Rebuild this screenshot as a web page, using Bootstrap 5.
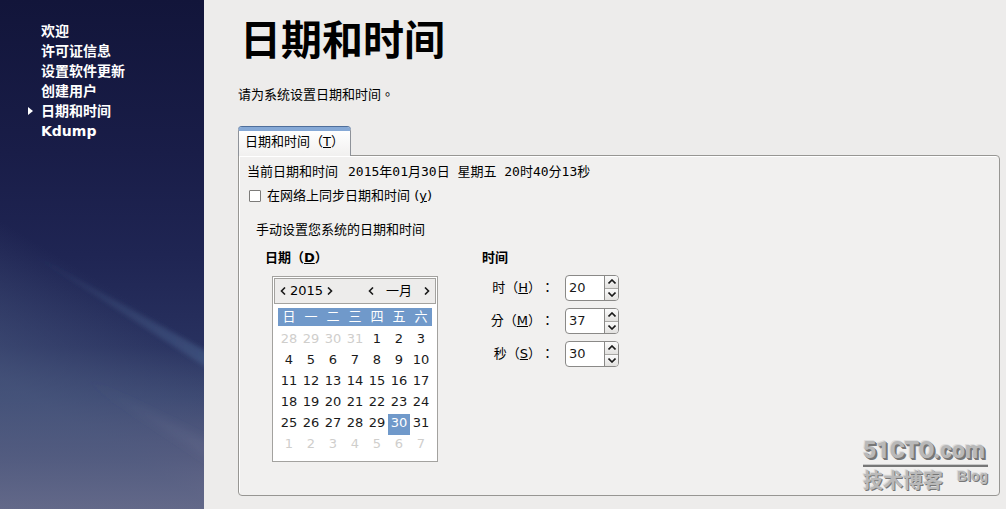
<!DOCTYPE html>
<html lang="zh-CN">
<head>
<meta charset="utf-8">
<meta name="viewport" content="width=device-width, initial-scale=1">
<title>日期和时间</title>
<link href="https://cdn.jsdelivr.net/npm/bootstrap@5.3.0/dist/css/bootstrap.min.css" rel="stylesheet">
<style>
body{font-family:"DejaVu Sans","Noto Sans CJK SC",sans-serif;font-size:13px;line-height:20px;color:#000;background:#edeceb;text-spacing-trim:space-all}
.mid{font-family:"DejaVu Sans","Noto Sans CJK TC",sans-serif;font-feature-settings:"locl" 0,"chws" 0}
.steps{width:204px;background:#161a42;color:#fff;font-size:14px;font-weight:700;padding:21px 0 0 41px}
.steps svg.sky{position:absolute;inset:0;width:100%;height:100%}
.steps ol{position:relative}
.step-on::before{content:"";position:absolute;left:-13px;margin-top:6px;border:4px solid transparent;border-left:5px solid #fff;border-right:0}
.work{padding:12px 6px 13px 34px}
.work h1{font-size:41px;line-height:58px;font-weight:700;margin:0 0 15px 2px}
.work .tabbar{margin-top:22px}
.tabbar .nav-link{font-size:13px;line-height:20px;color:#000;padding:1px 6px 4px;border:1px solid #8e9299;border-top:4px solid #86a9d6;border-bottom:0;border-radius:4px 4px 0 0;background:linear-gradient(#fff,#f1f0ef);position:relative;margin-bottom:-1px;box-shadow:0 -1px #4f6f9b}
.pane{border:1px solid #979693;border-radius:0 4px 4px 4px;background:#f1f0ef;box-shadow:inset 1px 1px #fff;padding:6px 8px}
.mono{font-family:"DejaVu Sans Mono","Noto Sans CJK SC",monospace;white-space:pre;margin-left:10px}
.sync{padding:4px 0 0 2px;gap:6px}
.sync input{appearance:none;width:12px;height:12px;margin:0;border:1px solid #7c7b79;border-radius:1px;background:#fff}
.sync input:checked{background:#7099ca}
.manual{padding:14px 0 0 9px}
.manual h2{font-size:13px;line-height:20px;font-weight:700;margin:0}
.cols{padding:8px 0 0 9px;gap:44px}
.cal{margin:8px 0 0 7px;width:166px;border:1px solid #a3a29f;background:#fff;padding:1px 1px 5px}
.calhead{border:1px solid #a3a29f;background:#edeceb;height:26px;padding:0 3px}
.calhead button{border:0;background:none;padding:0;width:10px;height:20px;line-height:0}
.calhead button svg{display:block;margin:auto}
.year{padding:0 2px}
.month{width:66px}
.days{width:154px;margin:4px auto 0;table-layout:fixed;text-align:center;line-height:17px}
.days th{background:#7099ca;color:#fff;font-weight:400;height:18px;padding:0;line-height:18px}
.days td{padding:0 0 4px;color:#1a1a1a}
.days tbody::before{content:"";display:block;height:4px}
.days .off{color:#cfcecc}
.days .sel{background:#7099ca;color:#fff}
.clock{margin-top:7px;gap:7px;display:grid;grid-template-columns:72px 54px;column-gap:11px}
.clock label{text-align:right;line-height:26px;white-space:nowrap}
.spin{height:26px;border:1px solid #8a8987;border-radius:4px;background:#fff;overflow:hidden}
.spin input{border:0;outline:0;width:38px;padding:0 0 0 3px;background:none;color:#1a1a1a}
.arrows{flex:1;border-left:1px solid #8a8987}
.arrows button{flex:1;border:0;padding:0;line-height:0;background:linear-gradient(#fafafa,#e2e1df)}
.arrows button+button{border-top:1px solid #a9a8a5}
.chev{fill:none;stroke:#1a1a1a;stroke-width:1.6}
.brandmark{position:absolute;right:18px;bottom:14px;width:125px;color:#b9b9b9;text-shadow:1px 1px #777,-1px -1px #ddd;font-weight:700}
.brandmark .site{font-family:Roboto,"Liberation Sans",sans-serif;font-weight:900;font-size:23px;line-height:29px;white-space:nowrap;text-shadow:1px 1px #777,2px 2px #777,-1px -1px #ddd;border-bottom:2px solid #777;box-shadow:inset 0 -1px #c8c8c8}
.brandmark .tech{font-size:20px;line-height:28px}
.brandmark .blog{font-family:"Liberation Sans",sans-serif;font-size:14px;line-height:18px}
</style>
</head>
<body>
<div class="d-flex min-vh-100 position-relative">
  <aside class="steps position-relative flex-shrink-0">
    <svg class="sky" viewBox="0 0 204 509" preserveAspectRatio="none" aria-hidden="true">
      <defs>
        <linearGradient id="night" x1="0" y1="0" x2="0" y2="1"><stop offset="0" stop-color="#12153a"/><stop offset=".3" stop-color="#191d48"/><stop offset=".5" stop-color="#1f2553"/><stop offset=".68" stop-color="#28315f"/><stop offset=".78" stop-color="#3a4670"/><stop offset=".9" stop-color="#5c5d80"/><stop offset="1" stop-color="#847c96"/></linearGradient>
        <linearGradient id="glow" gradientUnits="userSpaceOnUse" x1="90" y1="275" x2="20" y2="390"><stop offset="0" stop-color="#4c5b80" stop-opacity="0"/><stop offset="1" stop-color="#4c5b80" stop-opacity=".6"/></linearGradient>
        <linearGradient id="fade" x1="0" y1="0" x2="1" y2="0"><stop offset="0" stop-color="#54719b" stop-opacity="0"/><stop offset="1" stop-color="#4b6592" stop-opacity=".5"/></linearGradient>
        <linearGradient id="haze" x1="0" y1="0" x2="1" y2="0"><stop offset="0" stop-color="#7a809c" stop-opacity="0"/><stop offset="1" stop-color="#7a809c" stop-opacity=".2"/></linearGradient>
        <filter id="soft" x="-10%" y="-10%" width="120%" height="120%"><feGaussianBlur stdDeviation="2"/></filter>
        <filter id="softer" x="-10%" y="-20%" width="120%" height="140%"><feGaussianBlur stdDeviation="4"/></filter>
      </defs>
      <rect width="204" height="509" fill="url(#night)"/>
      <rect y="200" width="204" height="309" fill="url(#glow)"/>
      <path d="M25 250L215 356V373Z" fill="url(#fade)" filter="url(#soft)"/>
      <path d="M70 370L225 450V470Z" fill="url(#haze)" filter="url(#softer)"/>
    </svg>
    <ol class="list-unstyled m-0">
      <li>欢迎</li>
      <li>许可证信息</li>
      <li>设置软件更新</li>
      <li>创建用户</li>
      <li class="step-on" aria-current="step">日期和时间</li>
      <li>Kdump</li>
    </ol>
  </aside>

  <main class="work d-flex flex-column flex-grow-1">
    <h1>日期和时间</h1>
    <p class="mid m-0">请为系统设置日期和时间。</p>

    <div class="tabbar nav" role="tablist">
      <button class="nav-link" type="button" role="tab" aria-selected="true">日期和时间（<u>T</u>）</button>
    </div>
    <section class="pane flex-grow-1">
      <div>当前日期和时间<span class="mono">2015年01月30日 星期五 20时40分13秒</span></div>
      <div class="sync d-flex align-items-center">
        <input type="checkbox" id="ntp"><label for="ntp">在网络上同步日期和时间 (<u>y</u>)</label>
      </div>
      <div class="manual">
        <div>手动设置您系统的日期和时间</div>
        <div class="cols d-flex align-items-start">
          <div>
            <h2>日期（<u>D</u>）</h2>
            <div class="cal">
              <div class="calhead d-flex align-items-center">
                <button type="button" aria-label="上一年"><svg width="6" height="8" viewBox="0 0 6 8"><path class="chev" d="M5 .5L1.500 4L5 7.500"/></svg></button>
                <span class="year">2015</span>
                <button type="button" aria-label="下一年"><svg width="6" height="8" viewBox="0 0 6 8"><path class="chev" d="M1 .5L4.500 4L1 7.500"/></svg></button>
                <div class="month d-flex justify-content-between align-items-center ms-auto">
                  <button type="button" aria-label="上个月"><svg width="6" height="8" viewBox="0 0 6 8"><path class="chev" d="M5 .5L1.500 4L5 7.500"/></svg></button>
                  <span>一月</span>
                  <button type="button" aria-label="下个月"><svg width="6" height="8" viewBox="0 0 6 8"><path class="chev" d="M1 .5L4.500 4L1 7.500"/></svg></button>
                </div>
              </div>
              <table class="days">
                <thead><tr><th>日</th><th>一</th><th>二</th><th>三</th><th>四</th><th>五</th><th>六</th></tr></thead>
                <tbody>
                  <tr><td class="off">28</td><td class="off">29</td><td class="off">30</td><td class="off">31</td><td>1</td><td>2</td><td>3</td></tr>
                  <tr><td>4</td><td>5</td><td>6</td><td>7</td><td>8</td><td>9</td><td>10</td></tr>
                  <tr><td>11</td><td>12</td><td>13</td><td>14</td><td>15</td><td>16</td><td>17</td></tr>
                  <tr><td>18</td><td>19</td><td>20</td><td>21</td><td>22</td><td>23</td><td>24</td></tr>
                  <tr><td>25</td><td>26</td><td>27</td><td>28</td><td>29</td><td class="sel">30</td><td>31</td></tr>
                  <tr><td class="off">1</td><td class="off">2</td><td class="off">3</td><td class="off">4</td><td class="off">5</td><td class="off">6</td><td class="off">7</td></tr>
                </tbody>
              </table>
            </div>
          </div>
          <div>
            <h2>时间</h2>
            <div class="clock">
              <label class="mid" for="hour">时（<u>H</u>）：</label>
              <div class="spin d-flex"><input id="hour" type="text" inputmode="numeric" value="20">
                <div class="arrows d-flex flex-column"><button type="button" aria-label="加一小时"><svg width="8" height="5" viewBox="0 0 8 5"><path class="chev" d="M.5 4.500L4 1L7.500 4.500"/></svg></button><button type="button" aria-label="减一小时"><svg width="8" height="5" viewBox="0 0 8 5"><path class="chev" d="M.5 .5L4 4L7.500 .5"/></svg></button></div></div>
              <label class="mid" for="minute">分（<u>M</u>）：</label>
              <div class="spin d-flex"><input id="minute" type="text" inputmode="numeric" value="37">
                <div class="arrows d-flex flex-column"><button type="button" aria-label="加一分钟"><svg width="8" height="5" viewBox="0 0 8 5"><path class="chev" d="M.5 4.500L4 1L7.500 4.500"/></svg></button><button type="button" aria-label="减一分钟"><svg width="8" height="5" viewBox="0 0 8 5"><path class="chev" d="M.5 .5L4 4L7.500 .5"/></svg></button></div></div>
              <label class="mid" for="second">秒（<u>S</u>）：</label>
              <div class="spin d-flex"><input id="second" type="text" inputmode="numeric" value="30">
                <div class="arrows d-flex flex-column"><button type="button" aria-label="加一秒"><svg width="8" height="5" viewBox="0 0 8 5"><path class="chev" d="M.5 4.500L4 1L7.500 4.500"/></svg></button><button type="button" aria-label="减一秒"><svg width="8" height="5" viewBox="0 0 8 5"><path class="chev" d="M.5 .5L4 4L7.500 .5"/></svg></button></div></div>
            </div>
          </div>
        </div>
      </div>
    </section>
  </main>
  <div class="brandmark">
    <div class="site">51CTO.com</div>
    <div class="d-flex justify-content-between"><span class="tech">技术博客</span><span class="blog">Blog</span></div>
  </div>
</div>
<script src="https://cdn.jsdelivr.net/npm/bootstrap@5.3.0/dist/js/bootstrap.bundle.min.js"></script>
</body>
</html>
